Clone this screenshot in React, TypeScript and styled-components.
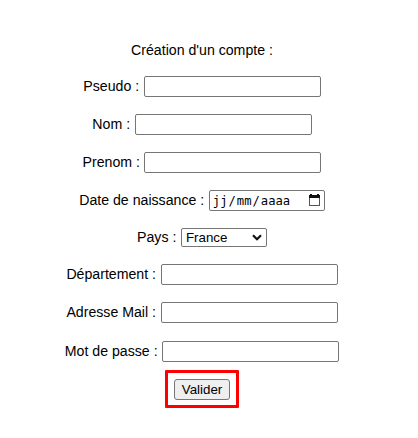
import React from 'react';
import styled, { createGlobalStyle } from 'styled-components';

const GlobalStyle = createGlobalStyle`
  body {
    margin: 0;
    background: #fff;
    color: #000;
    font-family: "Liberation Sans", Arial, sans-serif;
  }
  *, *::before, *::after { box-sizing: border-box; }
`;

const Form = styled.form`
  display: flex;
  flex-direction: column;
  align-items: center;
  width: 404px;
  height: 438px;
  padding-top: 40px;
  font-size: 14.15px;
`;

const Title = styled.div`
  height: 21px;
  line-height: 21px;
  margin-bottom: 15px;
`;

const Row = styled.label<{ $gap?: number; $height?: number }>`
  display: flex;
  align-items: center;
  gap: 4.6px;
  height: ${(p) => p.$height ?? 21}px;
  margin-bottom: ${(p) => p.$gap ?? 17}px;
  line-height: 21px;
  white-space: nowrap;
`;

const TextInput = styled.input`
  width: 177px;
  height: 21px;
  padding: 1px 2px;
  border: 1px solid #767676;
  border-radius: 2px;
  background: #fff;
  font: 13.333px "Liberation Sans", Arial, sans-serif;
`;

const DateField = styled.span`
  display: flex;
  align-items: center;
  justify-content: space-between;
  width: 116px;
  height: 21px;
  padding: 0 4px 1px 2px;
  border: 1px solid #767676;
  border-radius: 2px;
  font: 12.2px "DejaVu Sans Mono", monospace;
`;

const DateText = styled.span`
  padding-top: 1px;
`;

const DatePart = styled.span`
  padding: 0 1px;
`;

const SelectBox = styled.span`
  display: flex;
  align-items: center;
  justify-content: space-between;
  width: 86px;
  height: 19px;
  padding: 0 4px;
  border: 1px solid #767676;
  border-radius: 2px;
  font-size: 13.333px;
`;

const Highlight = styled.div`
  display: flex;
  align-items: center;
  justify-content: center;
  width: 74px;
  height: 38px;
  border: 3px solid #fe0000;
  border-radius: 1px;
`;

const SubmitButton = styled.button`
  width: 56px;
  height: 21px;
  padding: 0;
  border: 1px solid #767676;
  border-radius: 3px;
  background: #efefef;
  color: #000;
  font: 13.333px "Liberation Sans", Arial, sans-serif;
`;

const CalendarIcon = () => (
  <svg width="11" height="12" viewBox="0 0 11 12" shapeRendering="crispEdges">
    <path d="M1 0h2v1h5V0h2v1h1v3H0V1h1z" fill="#111" />
    <path d="M.5 4v7.5h10V4" fill="none" stroke="#555" />
  </svg>
);

const Chevron = () => (
  <svg width="10" height="7" viewBox="0 0 10 7">
    <path d="M1 1.2l4 4 4-4" fill="none" stroke="#111" strokeWidth="2.2" />
  </svg>
);

export default function App() {
  return (
    <>
      <GlobalStyle />
      <Form>
        <Title>Création d'un compte :</Title>
        <Row>Pseudo : <TextInput /></Row>
        <Row>Nom : <TextInput /></Row>
        <Row>Prenom : <TextInput /></Row>
        <Row>
          Date de naissance :
          <DateField>
            <DateText>
              <DatePart>jj</DatePart>/<DatePart>mm</DatePart>/<DatePart>aaaa</DatePart>
            </DateText>
            <CalendarIcon />
          </DateField>
        </Row>
        <Row $height={19}>
          Pays :
          <SelectBox>France<Chevron /></SelectBox>
        </Row>
        <Row>Département : <TextInput /></Row>
        <Row $gap={18}>Adresse Mail : <TextInput type="email" /></Row>
        <Row $gap={8}>Mot de passe : <TextInput type="password" /></Row>
        <Highlight>
          <SubmitButton type="button">Valider</SubmitButton>
        </Highlight>
      </Form>
    </>
  );
}
